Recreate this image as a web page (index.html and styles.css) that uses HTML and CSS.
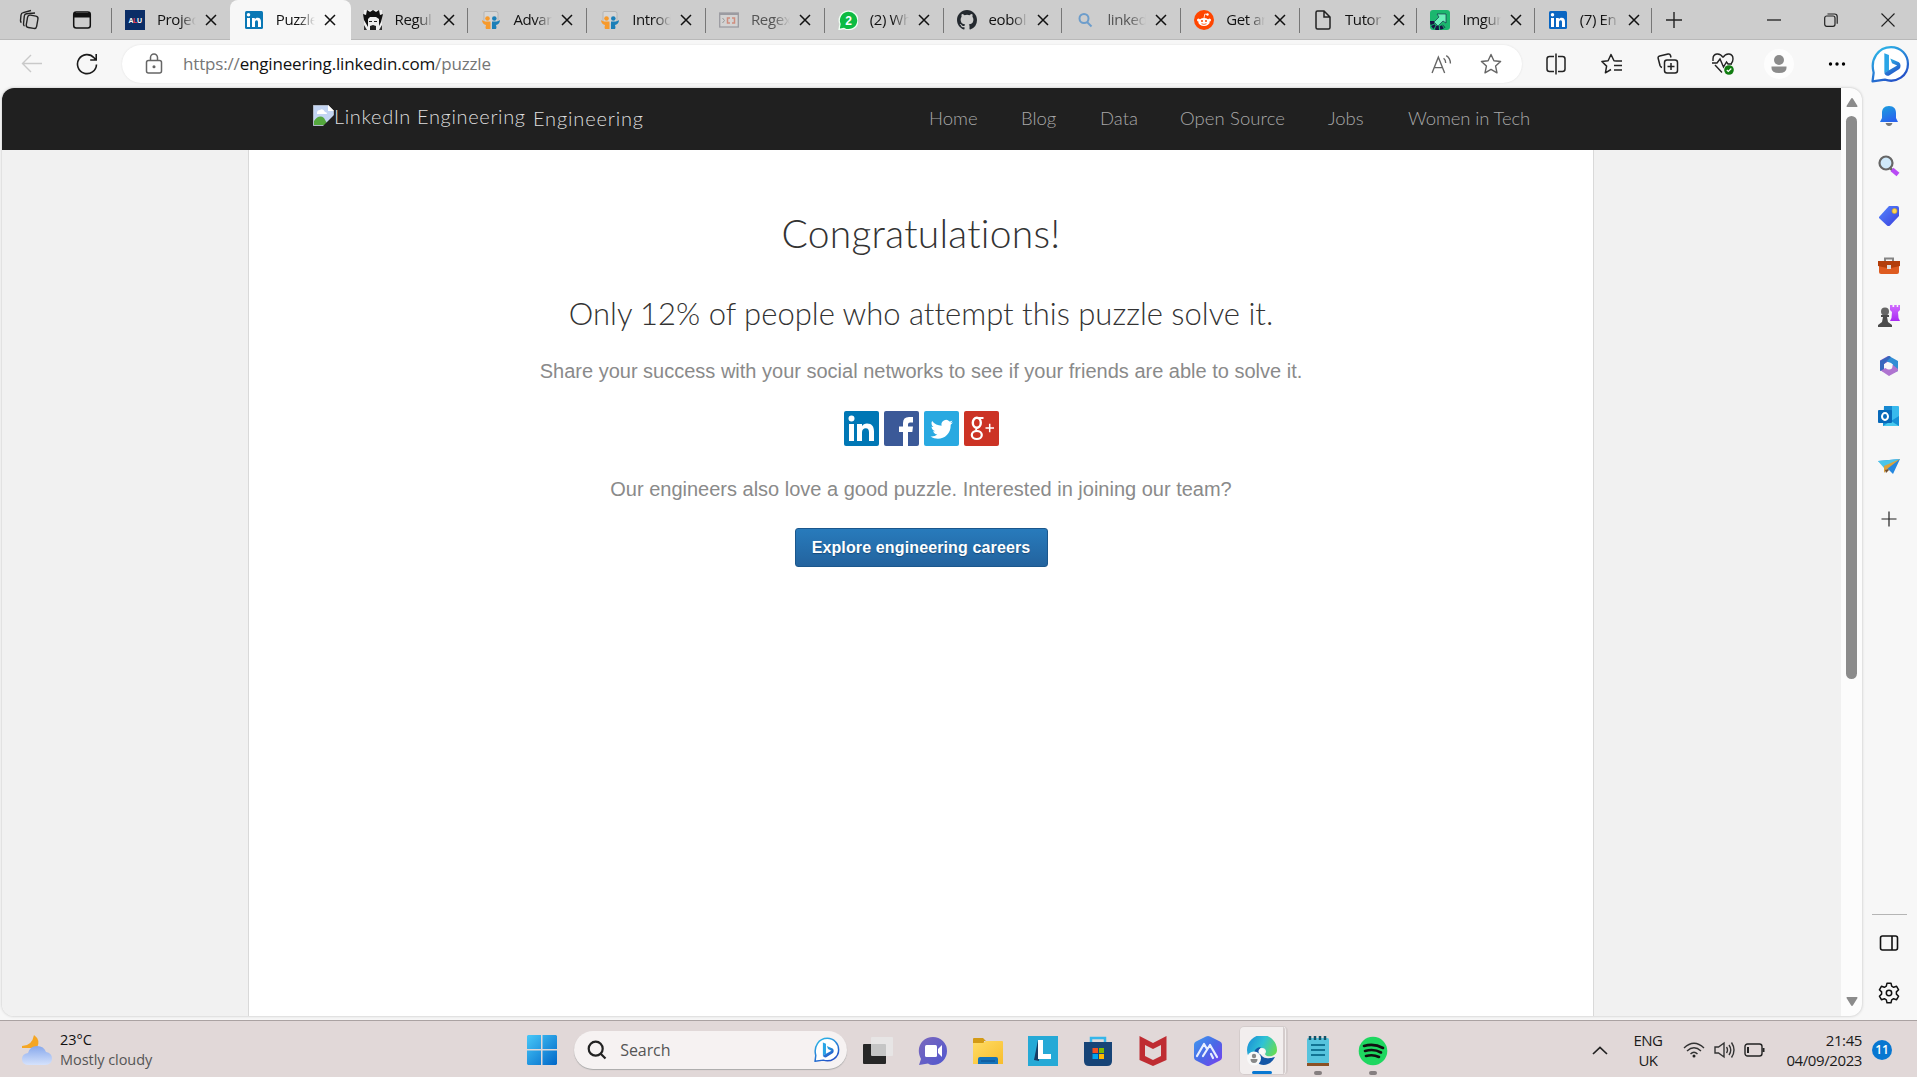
FILE: index.html
```html
<!DOCTYPE html>
<html lang="en">
<head>
<meta charset="utf-8">
<title>Puzzle</title>
<link rel="stylesheet" href="styles.css">
</head>
<body>
<svg width="0" height="0" class="defs" aria-hidden="true">
  <defs>
    <linearGradient id="bing" x1="0" y1="0" x2="0.6" y2="1"><stop offset="0" stop-color="#2fc0ea"/><stop offset="1" stop-color="#2352c8"/></linearGradient>
    <linearGradient id="blue" x1="0" y1="0" x2="1" y2="1"><stop offset="0" stop-color="#47c8f8"/><stop offset="1" stop-color="#0067c8"/></linearGradient>
    <linearGradient id="bell" x1="0" y1="0" x2="0.5" y2="1"><stop offset="0" stop-color="#1ba3dd"/><stop offset="1" stop-color="#2864ee"/></linearGradient>
    <linearGradient id="violet" x1="0" y1="0" x2="1" y2="1"><stop offset="0" stop-color="#5487ff"/><stop offset="1" stop-color="#3b3fdc"/></linearGradient>
    <linearGradient id="hex" x1="0" y1="0" x2="1" y2="1"><stop offset="0" stop-color="#3f9bf0"/><stop offset="0.5" stop-color="#4a68e6"/><stop offset="1" stop-color="#7a3ff0"/></linearGradient>
    <linearGradient id="chat" x1="0" y1="0" x2="1" y2="1"><stop offset="0" stop-color="#7b68bd"/><stop offset="1" stop-color="#5057cf"/></linearGradient>
    <linearGradient id="edge" x1="0" y1="0.2" x2="1" y2="0.6"><stop offset="0" stop-color="#1b8fd6"/><stop offset="0.5" stop-color="#2fc2d5"/><stop offset="1" stop-color="#66dc55"/></linearGradient>
    <linearGradient id="folder" x1="0" y1="0" x2="1" y2="1"><stop offset="0" stop-color="#ffdc65"/><stop offset="1" stop-color="#f8bd2c"/></linearGradient>
    <linearGradient id="pink" x1="0" y1="0" x2="0" y2="1"><stop offset="0" stop-color="#d06cff"/><stop offset="1" stop-color="#a92af2"/></linearGradient>
    <linearGradient id="cloud" x1="0" y1="0" x2="0" y2="1"><stop offset="0" stop-color="#87a8ec"/><stop offset="1" stop-color="#d5e2fc"/></linearGradient>
    <symbol id="close" viewBox="0 0 12 12"><path d="M1 1l10 10M11 1L1 11" stroke="#111" stroke-width="1.500" fill="none"/></symbol>
    <symbol id="in" viewBox="0 0 20 20"><path fill="#fff" d="M3 8h3v9H3zM4.500 3a1.700 1.700 0 1 1 0 3.500 1.700 1.700 0 0 1 0-3.500M8 8h2.800v1.300c.5-.9 1.500-1.500 2.800-1.500 2.700 0 3.400 1.700 3.400 4.200v5h-3v-4.500c0-1.200-.1-2.300-1.400-2.300S11 11.300 11 12.500V17H8z"/></symbol>
    <symbol id="share" viewBox="0 0 20 20"><path d="M3 13V2.500Q3 1.500 4 1.500h11Q17 1.500 17 3.500V13" fill="#d6d6d6" stroke="#b5b5b5"/><circle cx="6.500" cy="8.500" r="2.300" fill="#f79a2c"/><circle cx="13.300" cy="8.500" r="2.300" fill="#1b7fb8"/><path fill="#f79a2c" d="M1 10c2 2 5 1.500 8.500 1.500V19H5c-1-2 0-3 0-4-2-.5-4-2-4-5z"/><path fill="#1b7fb8" d="M19 10c-2 2-5 1.500-8 1.500V19h4c1-2 0-3 0-4 2-.5 4-2 4-5z"/></symbol>
    <symbol id="bingmark" viewBox="0 0 38 38"><path d="M1.500 35.500 2.600 27C-1 14 7 2 19.500 2 29 2 36 9.500 36 18.500 36 30 25 37.500 13.500 33.800z" fill="#fff" stroke="url(#bing)" stroke-width="2.200" stroke-linejoin="round"/><path d="M13 8l4.500 1.800V25l-4.500 2z" fill="#2aa5e6"/><path d="M13 27l4.500-2.500 8-4.500-5-2.300-1.700-4.600 8.400 3.600q1.600 1 1.600 3.500t-1.600 3.400L17.300 30q-4 0-4.300-3z" fill="url(#bing)"/></symbol>
  </defs>
</svg>

<div class="tabstrip">
  <div class="strip-tools">
    <svg width="22" height="22" viewBox="0 0 22 22" fill="none" stroke="#222" stroke-width="1.400"><rect x="9" y="6.500" width="10.500" height="12.500" rx="2.500" transform="rotate(10 14 12)"/><path d="M6.500 17q-1-.5-1-2l.8-8q.3-2 2.200-2.200L17 4M3.500 13.500q-1.200-.5-1-2L3 6q.3-2 2.200-2.400L13 1.500"/></svg>
    <svg width="20" height="20" viewBox="0 0 20 20"><rect x="1.700" y="2" width="16.600" height="16" rx="2.500" fill="none" stroke="#111" stroke-width="1.500"/><path d="M2 3h16v4.500H2z" fill="#111"/></svg>
  </div>
  <div class="tab"><svg class="fav" viewBox="0 0 20 20"><path fill="#0b2d66" d="M0 0h20v20H0z"/><text x="10" y="12.500" text-anchor="middle" class="alu"><tspan fill="#fff">A</tspan><tspan fill="#e43d56">L</tspan><tspan fill="#fff">U</tspan></text></svg><span>Projec</span><svg class="x"><use href="#close"/></svg></div>
  <div class="tab active"><svg class="fav" viewBox="0 0 20 20"><rect x="1" y="1" width="18" height="18" rx="1.500" fill="#0a78b5"/><use href="#in"/></svg><span>Puzzle</span><svg class="x"><use href="#close"/></svg></div>
  <div class="tab plain"><svg class="fav" viewBox="0 0 20 20"><path d="M1 0h18v20H1z" fill="#eee"/><path d="M1 10L0 4l3 1 1-5 3 2 3-2 3 2 3-2 1 5 3-1-2 8-2 4V9l-3-2H7L5 9v8z" fill="#111"/><path d="M6 11.500h3m2 0h3" stroke="#222"/><path d="M7 20v-4l3-1 3 1v4z" fill="#222"/><path d="M1 15l3 5H1zm18 0l-3 5h3z" fill="#333"/></svg><span>Regul</span><svg class="x"><use href="#close"/></svg></div>
  <div class="tab"><svg class="fav"><use href="#share"/></svg><span>Advan</span><svg class="x"><use href="#close"/></svg></div>
  <div class="tab"><svg class="fav"><use href="#share"/></svg><span>Introd</span><svg class="x"><use href="#close"/></svg></div>
  <div class="tab asleep"><svg class="fav" viewBox="0 0 20 20"><rect x=".7" y="3" width="18.600" height="14" fill="#d3d3d3" stroke="#9b9ba1" stroke-width="1.300"/><path d="M1 4h18" stroke="#9b9ba1" stroke-width="2"/><path d="M3.500 8l2 2.500-2 2.500" fill="none" stroke="#999"/><path d="M11 8H8.500v5H11m2-5h2.500v5H13" fill="none" stroke="#d08d7e" stroke-width="1.500"/></svg><span>Regex</span><svg class="x"><use href="#close"/></svg></div>
  <div class="tab"><svg class="fav" viewBox="0 0 20 20"><path d="M1 19.500L2 14A9.300 9.300 0 1 1 6 18.500z" fill="#0dbb42" stroke="#f0fff3" stroke-width="1.300"/><text x="10.500" y="14.500" text-anchor="middle" class="wa">2</text></svg><span>(2) Wh</span><svg class="x"><use href="#close"/></svg></div>
  <div class="tab"><svg class="fav" viewBox="0 0 16 16"><path fill="#24292f" d="M8 0C3.580 0 0 3.580 0 8c0 3.540 2.290 6.530 5.470 7.590.4.070.55-.17.55-.38 0-.19-.01-.82-.01-1.490-2.010.37-2.530-.49-2.690-.94-.09-.23-.48-.94-.82-1.130-.28-.15-.68-.52-.01-.53.63-.01 1.080.58 1.230.82.72 1.210 1.870.87 2.330.66.070-.52.28-.87.51-1.070-1.780-.2-3.640-.89-3.640-3.950 0-.87.31-1.590.82-2.150-.08-.2-.36-1.020.08-2.120 0 0 .67-.21 2.200.82a7.600 7.600 0 0 1 4 0c1.530-1.040 2.200-.82 2.200-.82.44 1.100.16 1.920.08 2.120.51.56.82 1.270.82 2.150 0 3.070-1.870 3.750-3.650 3.950.29.25.54.73.54 1.480 0 1.070-.01 1.930-.01 2.200 0 .21.15.46.55.38A8 8 0 0 0 16 8c0-4.420-3.580-8-8-8z"/></svg><span>eobol</span><svg class="x"><use href="#close"/></svg></div>
  <div class="tab asleep"><svg class="fav" viewBox="0 0 20 20" fill="none" stroke="#6d9dcb" stroke-width="2"><circle cx="9" cy="8.500" r="4.500"/><path d="M12 12l4.500 4.500"/></svg><span>linked</span><svg class="x"><use href="#close"/></svg></div>
  <div class="tab"><svg class="fav" viewBox="0 0 20 20"><circle cx="10" cy="10" r="10" fill="#ff4500"/><ellipse cx="10" cy="12" rx="5.700" ry="4" fill="#fff"/><circle cx="4.500" cy="10" r="1.500" fill="#fff"/><circle cx="15.500" cy="10" r="1.500" fill="#fff"/><circle cx="13.500" cy="4.500" r="1.200" fill="#fff"/><path d="M10 8l.8-4 2.700.5" fill="none" stroke="#fff" stroke-width=".8"/><circle cx="8" cy="11" r="1" fill="#ff4500"/><circle cx="12" cy="11" r="1" fill="#ff4500"/><path d="M7.500 13.700q2.500 1.400 5 0" stroke="#ff4500" fill="none" stroke-width=".8"/></svg><span>Get an</span><svg class="x"><use href="#close"/></svg></div>
  <div class="tab late"><svg class="fav" viewBox="0 0 20 20" fill="none" stroke="#222" stroke-width="1.500"><path d="M3 2.500Q3 1 4.500 1H11l6 6v10.500q0 1.500-1.500 1.500h-11Q3 19 3 17.500zM11 1v6h6"/></svg><span>Tutor</span><svg class="x"><use href="#close"/></svg></div>
  <div class="tab late"><svg class="fav" viewBox="0 0 20 20"><rect width="20" height="20" rx="3" fill="#1bb76e"/><path d="M2 11q0 7 6 7 4 0 6-2" fill="none" stroke="#171544" stroke-width="4" stroke-dasharray="3 1"/><path d="M7 4h9v9l-3-2-5 5-4-4 5-5z" fill="#6df0ba" stroke="#171544" stroke-width=".6"/></svg><span>Imgur</span><svg class="x"><use href="#close"/></svg></div>
  <div class="tab late"><svg class="fav" viewBox="0 0 20 20"><rect x="1" y="1" width="18" height="18" rx="1.500" fill="#0a66c2"/><use href="#in"/></svg><span>(7) En</span><svg class="x"><use href="#close"/></svg></div>
  <div class="newtab"><svg width="18" height="18" viewBox="0 0 18 18"><path d="M9 1v16M1 9h16" stroke="#222" stroke-width="1.400"/></svg></div>
  <div class="window-buttons">
    <svg width="14" height="14"><path d="M0 7h14" stroke="#111" stroke-width="1.200"/></svg>
    <svg width="14" height="14" viewBox="0 0 14 14" fill="none" stroke="#222" stroke-width="1.200"><rect x=".7" y="3" width="10.300" height="10.300" rx="2"/><path d="M3.500 1h7q2.700 0 2.700 2.700v7"/></svg>
    <svg width="14" height="14" viewBox="0 0 14 14"><path d="M.5.5l13 13m0-13l-13 13" stroke="#222" stroke-width="1.100"/></svg>
  </div>
</div>

<div class="toolbar">
  <div class="nav-buttons">
    <svg width="22" height="20" viewBox="0 0 22 20" fill="none" stroke="#c9c9c9" stroke-width="1.400"><path d="M21 9.500H1.500M10 1L1.500 9.500 10 18"/></svg>
    <svg width="22" height="22" viewBox="0 0 22 22" fill="none" stroke="#1b1b1b" stroke-width="1.600"><path d="M20.500 11.500A9.500 9.500 0 1 1 18 4.700l1.800 2M20.200 1v6h-6"/></svg>
  </div>
  <div class="address">
    <svg class="lock" width="18" height="22" viewBox="0 0 18 22" fill="none" stroke="#666" stroke-width="1.500"><rect x="1.500" y="7.500" width="15" height="12.500" rx="2"/><path d="M5.500 7V4.500a3.500 3.500 0 0 1 7 0V7"/><circle cx="9" cy="13.700" r=".8" fill="#666"/></svg>
    <div class="url"><span class="scheme">https://</span><span class="host">engineering.linkedin.com</span><span class="path">/puzzle</span></div>
    <div class="address-icons">
      <svg width="21" height="21" viewBox="0 0 20 20" fill="none" stroke="#666" stroke-width="1.300"><path d="M1 18L7 3l6 15M3 13h8M12 4q2 1.500 2 4.500M14.500 1.500Q18.500 4 18.500 9"/></svg>
      <svg width="22" height="22" viewBox="0 0 22 22" fill="none" stroke="#666" stroke-width="1.400" stroke-linejoin="round"><path d="M11 1.500l2.900 6.200 6.700.8-5 4.600 1.400 6.700-6-3.400-6 3.400 1.400-6.700-5-4.600 6.700-.8z"/></svg>
    </div>
  </div>
  <div class="actions">
    <svg width="22" height="22" viewBox="0 0 22 22" fill="none" stroke="#222" stroke-width="1.500"><path d="M9 3.500H4.500q-2.500 0-2.500 2.500v10q0 2.500 2.500 2.500H9M13 3.500h4.500Q20 3.500 20 6v10q0 2.500-2.500 2.500H13M11 .5v21"/></svg>
    <svg width="22" height="22" viewBox="0 0 22 22" fill="none" stroke="#222" stroke-width="1.500" stroke-linejoin="round"><path d="M15.500 8L13 7.800 10 1.500 7.100 7.700l-6.200.8 4.700 4.600-1.200 6.700L10 16.500M14.500 8H21M13 12.500h8M13 17h8"/></svg>
    <svg width="22" height="22" viewBox="0 0 22 22" fill="none" stroke="#222" stroke-width="1.500"><rect x="7.500" y="7" width="13" height="13" rx="2.500"/><path d="M14 10v7M10.500 13.500h7M5 14.500q-1.500-.5-2-2L1.200 5.500q-.5-2 1.500-2.500L11 1q2-.4 2.500 1.500l.5 2"/></svg>
    <svg width="22" height="22" viewBox="0 0 22 22" fill="none" stroke="#222" stroke-width="1.400"><path d="M11 4.500C8-.5 1-.2 1 6v2M11 4.500c3-5 10-4.700 10 1.500 0 2-1 4-2 5M3 12l7 7.500M0 10h5l3-4 3.500 8 3-5 1.500 2h4"/><circle cx="17" cy="17" r="4.800" fill="#107c10" stroke="none"/><path d="M14.800 17l1.500 1.500 3-3" stroke="#fff" stroke-width="1.200"/></svg>
    <svg width="32" height="32" viewBox="0 0 32 32"><circle cx="16" cy="16" r="15" fill="#fdfdfd"/><circle cx="16" cy="12" r="5" fill="#8b8b8b"/><path d="M8.500 18.500h15V20q0 5-7.500 5t-7.500-5z" fill="#8b8b8b"/></svg>
    <svg class="more" width="18" height="6"><circle cx="2.500" cy="3" r="1.700"/><circle cx="9" cy="3" r="1.700"/><circle cx="15.500" cy="3" r="1.700"/></svg>
    <svg width="39" height="39"><use href="#bingmark"/></svg>
  </div>
</div>

<div class="middle">
  <div class="viewport">
    <div class="page">
      <header class="site-header">
        <div class="brand">
          <svg width="21" height="21" viewBox="0 0 21 21"><path d="M0 0h15l6 6v15H0z" fill="#c3d5f3"/><path d="M0 0h15l6 6v15H0z" fill="none" stroke="#9b9b9b"/><path d="M15 0v6h6z" fill="#fff"/><path d="M4 8q0-3 3-3 3-2 5 2 2 0 2 2H4z" fill="#fff"/><path d="M1 20v-4q5-7 10-3l4 7z" fill="#54a73d"/><path d="M10 21l11-11v11z" fill="#202020"/></svg>
          <span class="alt">LinkedIn Engineering</span><span class="brand-name">Engineering</span>
        </div>
        <nav class="site-nav"><a class="n1">Home</a><a class="n2">Blog</a><a class="n3">Data</a><a class="n4">Open Source</a><a class="n5">Jobs</a><a class="n6">Women in Tech</a></nav>
      </header>
      <main class="sheet">
        <h1>Congratulations!</h1>
        <h2>Only 12% of people who attempt this puzzle solve it.</h2>
        <p class="lead">Share your success with your social networks to see if your friends are able to solve it.</p>
        <div class="social">
          <svg viewBox="0 0 35 35"><rect width="35" height="35" rx="2" fill="#0077b5"/><path fill="#fff" d="M5 13h5v17H5zM7.500 4.500a3 3 0 1 1 0 6 3 3 0 0 1 0-6M13 13h5v2.300c1-1.700 2.700-2.700 5-2.700 5 0 7 3 7 8V30h-5v-8.500c0-2.500-.7-4.300-3.200-4.300S18 19 18 21.500V30h-5z"/></svg>
          <svg viewBox="0 0 35 35"><rect width="35" height="35" rx="2" fill="#3b5998"/><path fill="#fff" d="M19 35V21h-4v-5.500h4V12q0-6 6-6h4v5.500h-3q-2 0-2 2v2h5l-.7 5.500H24v14z"/></svg>
          <svg viewBox="0 0 35 35"><rect width="35" height="35" rx="2" fill="#29a9e1"/><path fill="#fff" d="M29 11.200c-.8.400-1.700.6-2.600.7 1-.6 1.600-1.400 2-2.500-.9.500-1.900.9-2.900 1.100a4.600 4.600 0 0 0-7.900 4.200c-3.800-.2-7.200-2-9.500-4.800-1.200 2-.6 4.800 1.400 6.200-.7 0-1.400-.2-2-.6 0 2.200 1.500 4.200 3.700 4.700-.7.200-1.400.2-2.100.1.600 1.800 2.300 3.100 4.300 3.200A9.200 9.200 0 0 1 6.500 25.500C15 31 27 26 26.700 13.700c.9-.7 1.700-1.500 2.300-2.500z"/></svg>
          <svg viewBox="0 0 35 35" fill="none" stroke="#fff"><rect width="35" height="35" rx="2" fill="#cc3325" stroke="none"/><ellipse cx="12.800" cy="11.800" rx="4" ry="5" stroke-width="2.400"/><path d="M13 7h6.500M13.500 17q-3 1.500 0 3.500" stroke-width="1.800"/><ellipse cx="12.800" cy="24" rx="5" ry="4" stroke-width="2.200"/><path d="M21.500 17h8.500M25.700 12.800v8.500" stroke-width="1.500"/></svg>
        </div>
        <p class="team">Our engineers also love a good puzzle. Interested in joining our team?</p>
        <a class="cta">Explore engineering careers</a>
      </main>
    </div>
    <div class="scrollbar">
      <svg width="12" height="9"><path d="M6 0q.6 0 1 .7L11.500 8q.3 1-.8 1H1.300Q.2 9 .5 8L5 .7Q5.400 0 6 0" fill="#8b8b8b"/></svg>
      <div class="thumb"></div>
      <svg class="down" width="12" height="9"><path d="M6 9q.6 0 1-.7L11.500 1q.3-1-.8-1H1.300Q.2 0 .5 1L5 8.300q.4.700 1 .7" fill="#8b8b8b"/></svg>
    </div>
  </div>
  <aside class="sidebar">
    <svg viewBox="0 0 22 22"><path d="M11 1c5 0 7 3 7 7v5l2 4H2l2-4V8c0-4 2-7 7-7" fill="url(#bell)"/><path d="M7.500 18h7q-1 3-3.500 3t-3.500-3" fill="#777"/></svg>
    <svg viewBox="0 0 22 22"><path d="M12.500 13.500l2 1.700" stroke="#666" stroke-width="2.500"/><path d="M14 14.500l6 5" stroke="#b94af5" stroke-width="4.500"/><circle cx="8" cy="8" r="6.500" fill="#cfe9fa" stroke="#666" stroke-width="2.200"/></svg>
    <svg viewBox="0 0 22 22"><path d="M1 12L11 1h8q2 0 2 2v8L12 20.500q-1.500 1-3 0L1 13z" fill="url(#violet)"/><circle cx="16.500" cy="6" r="2.500" fill="#ffd752" stroke="#d2a32f" stroke-width=".8"/></svg>
    <svg viewBox="0 0 22 22"><path d="M7 7V3.500h8V7" fill="none" stroke="#858585" stroke-width="2"/><path d="M1 7q0-1 1-1h18q1 0 1 1v10q0 2-2 2H3q-2 0-2-2z" fill="#de5b20"/><path d="M0 6h22v5l-9 2H9l-9-2z" fill="#b33e0b"/><rect x="9" y="10" width="4" height="4" fill="#ddd"/></svg>
    <svg viewBox="0 0 22 22"><path d="M12 0h2.500v2h1.700V0h2.500v2h1.500V0H22v5l-2 2 .5 6 1.500 3H12l1.500-3 .5-6-2-2z" fill="url(#pink)"/><circle cx="7" cy="6.500" r="4" fill="#666"/><path d="M3 10h8v2H9l1 5 4 3v2H0v-2l4-3 1-5H3z" fill="#4b4b4b"/></svg>
    <svg viewBox="0 0 22 22"><path d="M10 1L2 5.500V15l4 2V9l6-3.500V1z" fill="#8061c8"/><path d="M11 1l9 5v10l-5 2V9.500L8 6z" fill="#318ed5"/><path d="M2 15l9-3 4-2 5 4v2l-9 5z" fill="#af74d0"/><path d="M2 6l9-5 2 1-7 7v5l-4 2z" fill="#3767bd"/><circle cx="11" cy="11" r="3.500" fill="#f7f7f7"/></svg>
    <svg viewBox="0 0 22 22"><path d="M6 1h14q1 0 1 1v18H5z" fill="#38b9ed"/><path d="M6 1h8v8H6z" fill="#1688d0"/><path d="M5 12l8 4 8-5v10H5z" fill="#158fd6"/><path d="M5 21l8-5 8 5z" fill="#48c9ee"/><rect x="0" y="5" width="14" height="13" rx="1" fill="#0869b9"/><ellipse cx="7" cy="11.500" rx="3" ry="3.400" fill="none" stroke="#fff" stroke-width="2"/></svg>
    <svg viewBox="0 0 22 22"><path d="M0 6l22-2-7 15-4-4z" fill="#2587df"/><path d="M0 6l22-2L6 13z" fill="#4bc5e9"/><path d="M6 11L22 4 9 14l-3 4z" fill="#dda33b"/><path d="M7 15l3-1 1 1-3 3z" fill="#734d2b"/></svg>
    <svg class="plus" viewBox="0 0 22 22"><path d="M11 3.500v15M3.500 11h15" stroke="#222" stroke-width="1.200"/></svg>
    <hr>
    <svg class="bottom" viewBox="0 0 22 22" fill="none" stroke="#111" stroke-width="1.600"><rect x="2.500" y="4" width="17" height="14" rx="2"/><path d="M14 4v14"/></svg>
    <svg class="bottom" viewBox="0 0 22 22" fill="none" stroke="#111" stroke-width="1.500" stroke-linejoin="round"><path d="M9 1.200h4l.7 3 1.900 1.100 3-1 2 3.500-2.200 2.100v2.200l2.200 2.100-2 3.500-3-1-1.900 1.100-.7 3H9l-.7-3-1.900-1.100-3 1-2-3.500 2.200-2.100V9.900L1.400 7.800l2-3.500 3 1 1.900-1.100z"/><circle cx="11" cy="11" r="2.700"/></svg>
  </aside>
</div>

<footer class="taskbar">
  <div class="weather">
    <svg width="32" height="32" viewBox="0 0 32 32"><path d="M13 1q7 5 3 13H1V12q10 0 12-11" fill="#f5a623"/><path d="M8 31q-7 0-7-6 0-5 6-6 2-7 9-7t9 6q6 1 6 6.500 0 6.500-7 6.500z" fill="url(#cloud)"/></svg>
    <div><div class="temp">23°C</div><div class="sky">Mostly cloudy</div></div>
  </div>
  <div class="start"><svg width="30" height="30"><path d="M1 0h13v14H0V1zM15.500 0H29l1 1v13H15.500zM0 15.500h14V30H1l-1-1zM15.500 15.500H30V29l-1 1H15.500z" fill="url(#blue)"/></svg></div>
  <div class="search">
    <svg width="20" height="20" viewBox="0 0 20 20" fill="none" stroke="#222" stroke-width="2.200"><circle cx="8.700" cy="8.700" r="7"/><path d="M13.500 13.500l5 5"/></svg>
    <span>Search</span>
    <svg width="26" height="26"><use href="#bingmark"/></svg>
  </div>
  <div class="apps">
    <div class="app"><svg viewBox="0 0 30 30"><rect y="8" width="23" height="20" rx="1" fill="#272727"/><rect x="8" y="1" width="22" height="19" rx="1" fill="#e8e8e8" fill-opacity=".82"/></svg></div>
    <div class="app"><svg viewBox="0 0 30 30"><path d="M1 29l2-6C-3 12 4 1 15 1a14 14 0 0 1 0 28q-3 0-5-1.500z" fill="url(#chat)"/><rect x="7" y="9" width="12" height="12" rx="1.500" fill="#fff"/><path d="M20 13l4-4v12l-4-4z" fill="#fff"/></svg></div>
    <div class="app"><svg viewBox="0 0 30 30"><path d="M0 3q0-1 1-1h9l3 3h-2v4H0z" fill="#d39a16"/><path d="M0 7h10l3-2h16q1 0 1 1v22H0z" fill="url(#folder)"/><path d="M5 28v-5q0-2 2-2h16q2 0 2 2v5z" fill="#1473ba"/><path d="M8 25h14" stroke="#0b4d8c"/></svg></div>
    <div class="app"><svg viewBox="0 0 30 30"><path d="M0 0h30v30H0z" fill="#25a9d6"/><path d="M10 4L6 24l5 1z" fill="#173c65"/><path d="M10 4h5v14h8v5H10z" fill="#fff"/></svg></div>
    <div class="app"><svg viewBox="0 0 30 30"><path d="M8 7V2h14v5" fill="none" stroke="#35b6ea" stroke-width="2.500"/><path d="M1 6h28v19q0 5-5 5H6q-5 0-5-5z" fill="#174477"/><path d="M9.500 12H15v5H9.500z" fill="#f25022"/><path d="M16 12h5v5h-5z" fill="#7fba00"/><path d="M9.500 18H15v5H9.500z" fill="#00a4ef"/><path d="M16 18h5v5h-5z" fill="#ffb900"/></svg></div>
    <div class="app"><svg viewBox="0 0 30 30"><path d="M1.500 0L15 7l13.500-7v24L15 30 1.500 24zM7 9v11l8 4 8-4V9l-8 4z" fill="#bf2c32" fill-rule="evenodd"/></svg></div>
    <div class="app"><svg viewBox="0 0 30 30"><path d="M13 .6q2-1 4 0l10 5q2 1 2 3v13q0 2-2 3l-10 5q-2 1-4 0l-10-5q-2-1-2-3v-13q0-2 2-3z" fill="url(#hex)"/><path d="M4 20l7-12 3 5M10 20l7-11 7 12M18 18l2 4" fill="none" stroke="#e8efff" stroke-width="2.200" stroke-linecap="round" stroke-linejoin="round"/></svg></div>
    <div class="app current"><svg viewBox="0 0 30 30"><path d="M0 14A15 15 0 0 1 30 14c0 7-11 8-12 4 2-2 1-6-3-6-5 0-8 4-8 11Q0 22 0 14" fill="url(#edge)"/><path d="M7 18c0-4 3-7 7-7-3 3-1 10 5 11 4 .8 7-.5 9-1-6 12-21 10-21-3" fill="#1456a6"/><circle cx="14.500" cy="15.500" r="3" fill="#f8f8f8"/><circle cx="7" cy="22.500" r="7" fill="#f8f8f8"/><circle cx="7" cy="20" r="2.200" fill="#888"/><path d="M3.500 23h7q0 4-3.500 4t-3.500-4" fill="#888"/></svg></div>
    <div class="app running"><svg viewBox="0 0 30 30"><path d="M4 27h22v3H4z" fill="#8b5126"/><rect x="4" y="2" width="22" height="25" rx="1.500" fill="#56c3dd"/><path d="M8 9h14M8 14h14M8 19h14" stroke="#127494" stroke-width="2"/><path d="M7 0v4m5-4v4m5-4v4m5-4v4" stroke="#155368" stroke-width="2.500"/></svg></div>
    <div class="app running"><svg viewBox="0 0 30 30"><circle cx="15" cy="15" r="14.300" fill="#1ed760"/><path d="M6 10q10-3 19 2M7 15q9-2.500 16 1.500M8 20q7-2 13 1" fill="none" stroke="#111" stroke-width="2.600" stroke-linecap="round"/></svg></div>
  </div>
  <div class="tray">
    <svg width="16" height="9" viewBox="0 0 16 9"><path d="M1 8l7-6.500L15 8" stroke="#222" stroke-width="1.700" fill="none"/></svg>
    <div class="lang">ENG<br>UK</div>
    <div class="status">
      <svg width="22" height="16" viewBox="0 0 22 16" fill="none" stroke="#333" stroke-width="1.400"><path d="M1 6q10-9.500 20 0M4 9q7-6.500 14 0M7.500 12q3.500-3.500 7 0"/><circle cx="11" cy="14" r="1.500" fill="#222" stroke="none"/></svg>
      <svg width="21" height="18" viewBox="0 0 21 18" fill="none" stroke="#333" stroke-width="1.400"><path d="M1 6h3.500L10 2v14l-5.500-4H1zM12.500 6q2 3 0 6M15 4q3.500 5 0 10M17.500 1.500q5 7.500 0 15"/></svg>
      <svg width="21" height="14" viewBox="0 0 21 14" fill="none" stroke="#222" stroke-width="1.400"><rect x="1" y="1" width="17" height="12" rx="2.500"/><path d="M4 4v6M19.500 5v4" stroke-width="2"/></svg>
    </div>
    <div class="clock">21:45<br><span>04/09/2023</span></div>
    <div class="badge">11</div>
  </div>
</footer>
</body>
</html>
```
FILE: styles.css
```css
* { box-sizing: border-box; }
body { margin: 0; width: 1917px; height: 1077px; overflow: hidden; display: flex; flex-direction: column; background: #f7f7f7; color: #111; font-family: "Open Sans", "Noto Sans", sans-serif; }
svg { display: block; flex: none; }
.defs { position: absolute; }

/* Browser tabs */
.tabstrip { height: 40px; flex: none; display: flex; background: #cdcdcd; border-bottom: 1px solid #b9b9b9; }
.strip-tools { width: 111px; display: flex; align-items: center; padding-left: 18px; gap: 32px; }
.tab { width: 118.8px; flex: none; display: flex; align-items: center; padding: 0 0 0 14px; background: linear-gradient(#777, #777) 0 8px / 1px 25px no-repeat; font-size: 15px; letter-spacing: -0.4px; }
.tab.late { width: 117.4px; }
.tab .fav { width: 20px; height: 20px; margin-right: 12px; }
.tab span { width: 41px; line-height: 22px; margin-bottom: 2px; overflow: hidden; white-space: nowrap; -webkit-mask-image: linear-gradient(90deg, #000 55%, transparent 95%); mask-image: linear-gradient(90deg, #000 55%, transparent 95%); }
.tab .x { width: 12px; height: 12px; margin-left: 7px; }
.tab.active { width: 121px; margin-right: -2.2px; background: #f7f7f7; border-radius: 8px 8px 0 0; height: 40px; }
.tab.plain { background: none; }
.tab.asleep span { color: #555; }
.alu { font: bold 7px "Liberation Sans", sans-serif; }
.wa { font: bold 12px "Liberation Sans", sans-serif; fill: #fff; }
.newtab { width: 48px; background: linear-gradient(#777, #777) 0 8px / 1px 25px no-repeat; display: flex; align-items: center; padding-left: 14px; }
.window-buttons { flex: 1; display: flex; align-items: center; justify-content: flex-end; gap: 43px; padding-right: 22px; }

/* Address row */
.toolbar { height: 48px; flex: none; display: flex; align-items: center; }
.nav-buttons { width: 122px; display: flex; align-items: center; padding-left: 21px; gap: 33px; }
.address { width: 1400px; height: 38px; border-radius: 19px; background: #fff; display: flex; align-items: center; padding: 0 20px 0 23px; box-shadow: 0 0 2px #ddd; }
.url { margin: 0 0 2px 20px; font-size: 17px; letter-spacing: -0.17px; color: #767676; white-space: nowrap; }
.url .host { color: #111; }
.address-icons { margin-left: auto; display: flex; align-items: center; gap: 28px; }
.actions { flex: 1; display: grid; grid-template-columns: 56px 56px 55px 55px 58px 56px 1fr; padding-left: 6px; place-items: center; }
.actions .more { margin-left: 2px; }

/* Viewport */
.middle { height: 932px; flex: none; display: flex; }
.viewport { width: 1860px; height: 928px; margin-left: 2px; display: flex; border-radius: 12px; overflow: hidden; background: #fcfcfc; box-shadow: 0 0 3px #bbb; }
.page { width: 1839px; display: flex; flex-direction: column; background: #f1f1f1; }
.site-header { height: 62px; flex: none; background: #202020; display: flex; align-items: center; padding-left: 311px; font-family: Lato, sans-serif; font-weight: 300; font-size: 20px; white-space: nowrap; }
.brand { width: 616px; display: flex; align-items: center; color: #dedede; padding-bottom: 7px; }
.alt { width: 199px; letter-spacing: 0.65px; }
.brand-name { letter-spacing: 0.85px; padding-top: 5px; }
.site-nav { display: flex; color: #a8a8a8; font-size: 18.500px; padding-bottom: 2px; }
.n1 { width: 92px; }
.n2 { width: 79px; }
.n3 { width: 80px; }
.n4 { width: 148px; letter-spacing: 0.1px; }
.n5 { width: 80px; }
.n6 { letter-spacing: -0.12px; }
.sheet { flex: 1; width: 1346px; margin-left: 246px; background: #fff; border: 1px solid #d9d9d9; border-width: 0 1px; display: flex; flex-direction: column; align-items: center; color: #333; white-space: nowrap; }
h1, h2 { font-family: Lato, sans-serif; font-weight: 300; font-variant-ligatures: none; margin: 0; }
h1 { font-size: 39px; line-height: 48px; margin-top: 59px; letter-spacing: 0.25px; }
h2 { font-size: 31px; line-height: 40px; margin-top: 36px; }
.lead, .team { margin: 0; font: 20px/24px "Liberation Sans", sans-serif; color: #8a8a8a; }
.lead { margin-top: 26px; }
.social { display: flex; gap: 5px; margin-top: 28px; }
.social svg { width: 35px; height: 35px; }
.team { margin-top: 31px; }
.cta { margin-top: 27px; width: 253px; height: 39px; border: 1px solid #1b578c; border-radius: 3px; background: linear-gradient(#287bbc, #23639e); color: #fff; font: bold 16px/37px "Liberation Sans", sans-serif; letter-spacing: 0.13px; text-align: center; text-shadow: 0 1px 1px #174a78; }
.scrollbar { width: 21px; display: flex; flex-direction: column; align-items: center; padding: 10px 0; }
.thumb { width: 11px; height: 563px; margin-top: 9px; border-radius: 6px; background: #8b8b8b; }
.down { margin-top: auto; }
.sidebar { flex: 1; display: flex; flex-direction: column; align-items: center; padding: 17px 1px 16px 0; gap: 28px; }
.sidebar svg { width: 22px; height: 22px; }
.sidebar .plus { margin-top: 3px; }
.sidebar hr { width: 35px; height: 1px; margin: auto 0 -11px; border: 0; background: #b5b5b5; }

/* Taskbar */
.taskbar { height: 57px; flex: none; display: flex; align-items: center; background: #e1d8d8; border-top: 1px solid #aaa2a2; padding-top: 2px; }
.weather { width: 515px; display: flex; align-items: center; padding-left: 21px; gap: 7px; font-size: 14.500px; line-height: 20px; letter-spacing: -0.05px; }
.sky { color: #555; }
.start { width: 60px; padding-left: 13px; }
.search { width: 273px; height: 38px; border-radius: 19px; background: #f6f2f2; box-shadow: 0 1px 1px #aaa; display: flex; align-items: center; padding: 0 7px 0 13px; font-size: 16px; letter-spacing: -0.1px; color: #555; }
.search span { flex: 1; margin-left: 13px; }
.apps { display: flex; margin-left: 3px; }
.app { width: 55px; height: 56px; display: flex; flex-direction: column; align-items: center; padding-top: 14px; }
.app svg { width: 30px; height: 30px; }
.app.running::after, .app.current::after { content: ""; width: 8px; height: 4px; margin-top: 5px; border-radius: 2px; background: #857f80; }
.app.current { width: 49px; height: 49px; margin: 4px 2px 0 4px; padding-top: 9px; border-radius: 5px; background: #f2eeee; border: 1px solid #d4cccc; border-right: 5px double #d4cccc; }
.app.current::after { width: 20px; background: #0877d1; }
.tray { flex: 1; display: flex; align-items: center; padding: 0 25px 0 192px; font-size: 15px; line-height: 20px; color: #1b1b1b; }
.lang { margin-left: 19px; width: 42px; text-align: center; letter-spacing: -0.5px; }
.status { display: flex; align-items: center; gap: 9px; margin-left: 14px; }
.clock { width: 97px; text-align: right; letter-spacing: -0.4px; white-space: nowrap; }
.badge { width: 20px; height: 20px; margin-left: 10px; border-radius: 50%; background: #0877d1; color: #fff; font-size: 12px; font-weight: 600; text-align: center; flex: none; }
```
